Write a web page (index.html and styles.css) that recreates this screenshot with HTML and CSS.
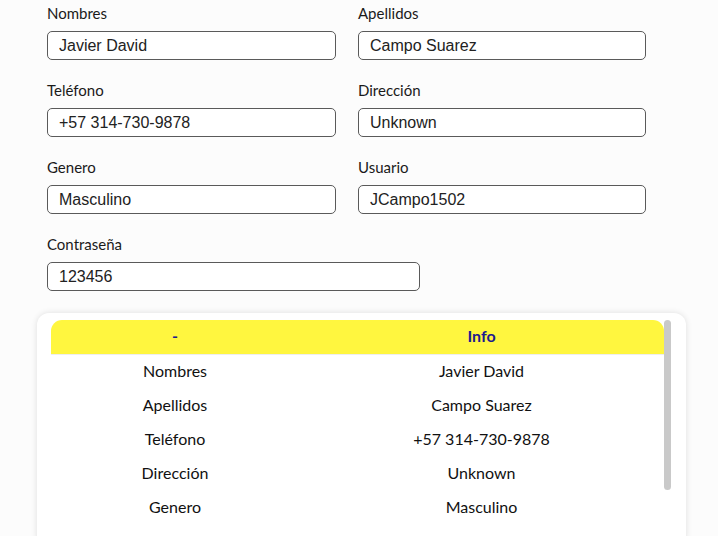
FILE: index.html
```html
<!DOCTYPE html>
<html lang="es">
<head>
<meta charset="utf-8">
<title>Perfil</title>
<link rel="stylesheet" href="styles.css">
</head>
<body>
<main class="page">
  <form class="form">
    <div class="field">
      <label class="label">Nombres</label>
      <input class="input" type="text" value="Javier David">
    </div>
    <div class="field">
      <label class="label">Apellidos</label>
      <input class="input" type="text" value="Campo Suarez">
    </div>
    <div class="field">
      <label class="label">Teléfono</label>
      <input class="input" type="text" value="+57 314-730-9878">
    </div>
    <div class="field">
      <label class="label">Dirección</label>
      <input class="input" type="text" value="Unknown">
    </div>
    <div class="field">
      <label class="label">Genero</label>
      <input class="input" type="text" value="Masculino">
    </div>
    <div class="field">
      <label class="label">Usuario</label>
      <input class="input" type="text" value="JCampo1502">
    </div>
    <div class="field field-wide">
      <label class="label">Contraseña</label>
      <input class="input input-wide" type="text" value="123456">
    </div>
  </form>

  <section class="card">
    <div class="scroll">
      <div class="viewport">
        <table class="table">
          <thead>
            <tr><th class="col-key">-</th><th class="col-val">Info</th></tr>
          </thead>
          <tbody>
            <tr><td>Nombres</td><td>Javier David</td></tr>
            <tr><td>Apellidos</td><td>Campo Suarez</td></tr>
            <tr><td>Teléfono</td><td>+57 314-730-9878</td></tr>
            <tr><td>Dirección</td><td>Unknown</td></tr>
            <tr><td>Genero</td><td>Masculino</td></tr>
            <tr><td>Usuario</td><td>JCampo1502</td></tr>
            <tr><td>Contraseña</td><td>123456</td></tr>
          </tbody>
        </table>
      </div>
      <div class="scrollbar"><div class="thumb"></div></div>
    </div>
  </section>
</main>
</body>
</html>
```

FILE: styles.css
```css
html {
  overflow: hidden;
}

body {
  margin: 0;
  background: #fcfcfc;
  font-family: "Lato", "Noto Sans", sans-serif;
  color: #111;
}

.page {
  padding: 3px 32px 0 37px;
}

.form {
  display: grid;
  grid-template-columns: 289px 288px;
  column-gap: 22px;
  row-gap: 20px;
  padding-left: 10px;
}

.field {
  display: flex;
  flex-direction: column;
  gap: 8px;
}

.field-wide {
  grid-column: 1 / span 2;
}

.label {
  font-size: 15px;
  line-height: 20px;
  color: #1a1a1a;
}

.input {
  box-sizing: border-box;
  height: 29px;
  width: 100%;
  border: 1px solid #5a5a5a;
  border-radius: 5px;
  padding: 0 11px;
  font-family: "Liberation Sans", Arial, sans-serif;
  font-size: 16px;
  color: #222;
  background: #fff;
}

.input-wide {
  width: 373px;
}

.card {
  margin-top: 22px;
  width: 649px;
  box-sizing: border-box;
  background: #fff;
  border-radius: 12px;
  box-shadow: 0 0 6px rgba(0, 0, 0, 0.12);
  padding: 7px 15px 14px 14px;
}

.scroll {
  display: flex;
  height: 215px;
}

.viewport {
  width: 613px;
  overflow: hidden;
}

.scrollbar {
  width: 7px;
}

.thumb {
  height: 170px;
  background: #c9c9c9;
  border-radius: 4px;
}

.table {
  width: 613px;
  border-collapse: collapse;
  font-size: 16px;
}

.table th {
  box-sizing: border-box;
  height: 34px;
  padding: 0 0 2px;
  background: #fff63f;
  color: #1d1a8e;
  font-weight: 700;
  border-bottom: 1px solid #eeeeee;
}

.table th.col-key {
  width: 248px;
  border-top-left-radius: 11px;
}

.table th.col-val {
  border-top-right-radius: 11px;
}

.table td {
  box-sizing: border-box;
  height: 34px;
  padding: 0 0 2px;
  text-align: center;
  color: #111;
}
```
